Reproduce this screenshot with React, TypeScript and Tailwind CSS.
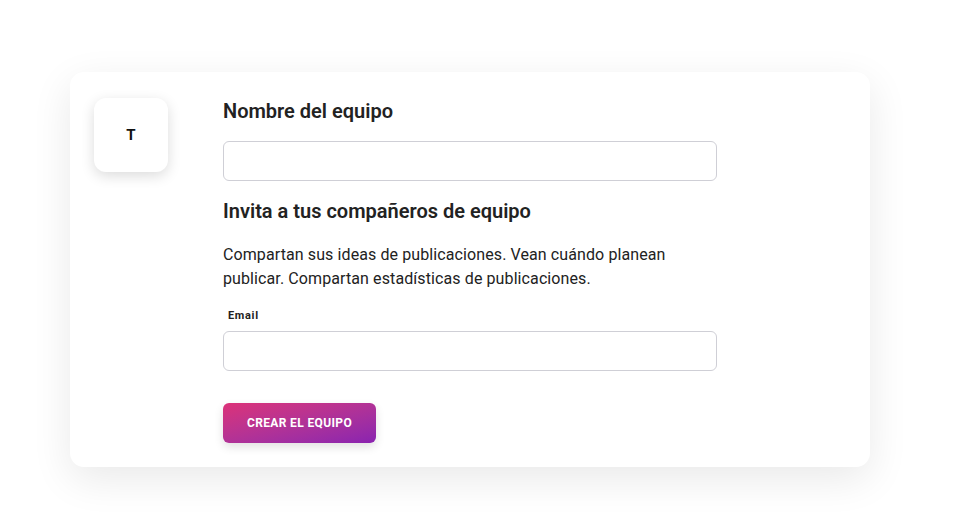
export default function App() {
  return (
    <div
      className="min-h-screen w-full bg-white pt-[72px]"
      style={{ fontFamily: 'Roboto, "Noto Sans", sans-serif' }}
    >
      <div className="ml-[70px] w-[800px] rounded-[14px] bg-white pt-[25px] pb-[24px] pl-[24px] shadow-[0_12px_40px_rgba(0,0,0,0.09)]">
        <div className="flex items-start">
          {/* Avatar del equipo */}
          <div className="mt-px flex h-[74px] w-[74px] shrink-0 items-center justify-center rounded-[12px] bg-white shadow-[0_4px_14px_rgba(0,0,0,0.14)]">
            <span className="text-[15px] font-bold text-[#111]">T</span>
          </div>

          <div className="ml-[55px] w-[494px]">
            <h2 className="text-[20px] leading-[28px] font-semibold text-[#222]">
              Nombre del equipo
            </h2>
            <input
              type="text"
              className="mt-4 block h-[40px] w-full rounded-[6px] border border-[#cfcfd6] bg-white px-3 outline-none"
            />

            <h2 className="mt-4 text-[20px] leading-[28px] font-semibold text-[#222]">
              Invita a tus compañeros de equipo
            </h2>
            <p className="mt-[18px] text-[16px] leading-[24px] tracking-[0.1px] text-[#222]">
              Compartan sus ideas de publicaciones. Vean cuándo planean publicar. Compartan estadísticas de publicaciones.
            </p>

            <label className="mt-[17px] block pl-[5px] text-[11px] leading-[16px] font-bold tracking-[0.06em] text-[#222]">
              Email
            </label>
            <input
              type="email"
              className="mt-[7px] block h-[40px] w-full rounded-[6px] border border-[#cfcfd6] bg-white px-3 outline-none"
            />

            <button className="mt-8 flex h-[40px] w-[153px] items-center justify-center rounded-[6px] bg-gradient-to-br from-[#dc3178] to-[#8a22b0] text-[12px] font-bold tracking-[0.03em] text-white uppercase shadow-[0_4px_10px_rgba(0,0,0,0.12)]">
              Crear el equipo
            </button>
          </div>
        </div>
      </div>
    </div>
  );
}
